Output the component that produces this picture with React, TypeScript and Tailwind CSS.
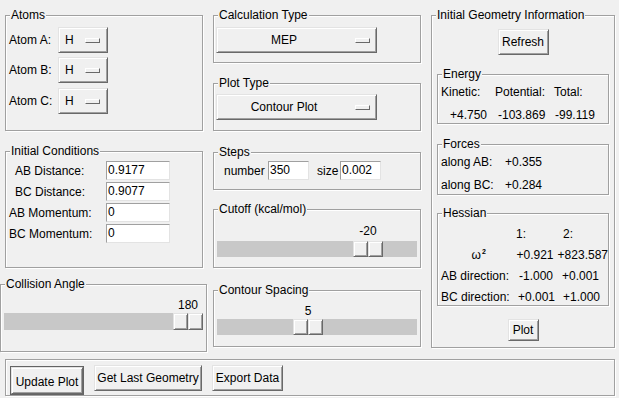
import type { ReactNode } from 'react';

const raised =
  'bg-[#f0f0f0] border border-t-[#e3e3e3] border-l-[#e3e3e3] border-b-[#696969] border-r-[#696969] shadow-[inset_1px_1px_0_#ffffff,inset_-1px_-1px_0_#a0a0a0]';

const entry =
  'bg-white border border-t-[#a0a0a0] border-l-[#a0a0a0] border-b-[#e3e3e3] border-r-[#e3e3e3] pl-px leading-[17px]';

function Group({ label, className, children }: { label: string; className: string; children?: ReactNode }) {
  return (
    <div className={`relative border border-[#a0a0a0] shadow-[inset_1px_1px_0_#ffffff,1px_1px_0_#ffffff] ${className}`}>
      <span className="absolute -top-[8px] left-[4px] bg-[#f0f0f0] px-px leading-[14px] whitespace-nowrap">{label}</span>
      {children}
    </div>
  );
}

function Indicator() {
  return (
    <span className="block w-[15px] h-[5px] bg-[#f0f0f0] border border-t-white border-l-white border-b-[#696969] border-r-[#696969]" />
  );
}

function AtomRow({ label, className }: { label: string; className: string }) {
  return (
    <div className={`flex items-center ${className}`}>
      <span className="w-[49px]">{label}</span>
      <div className={`w-[50px] h-[26px] flex items-center pl-[6px] ${raised}`}>
        <span className="w-[20px] leading-[14px]">H</span>
        <Indicator />
      </div>
    </div>
  );
}

function OptionMenu({ text, className }: { text: string; className: string }) {
  return (
    <div className={`w-[161px] h-[26px] flex items-center pr-[6px] ${raised} ${className}`}>
      <span className="flex-1 text-center pr-[4px] leading-[14px]">{text}</span>
      <Indicator />
    </div>
  );
}

function Thumb({ left }: { left: number }) {
  return (
    <div className="absolute top-0 h-full w-[30px] flex" style={{ left }}>
      <div className={`w-[15px] h-full ${raised}`} />
      <div className={`w-[15px] h-full ${raised}`} />
    </div>
  );
}

function Slider({
  value,
  from,
  to,
  width,
  className,
  labelClass,
  troughClass,
}: {
  value: number;
  from: number;
  to: number;
  width: number;
  className: string;
  labelClass: string;
  troughClass: string;
}) {
  const left = Math.round(((value - from) / (to - from)) * (width - 30));
  return (
    <div className={className}>
      <div className={`w-[30px] text-center leading-[14px] ${labelClass}`} style={{ marginLeft: left }}>
        {value}
      </div>
      <div className={`relative bg-[#c8c8c8] ${troughClass}`} style={{ width }}>
        <Thumb left={left} />
      </div>
    </div>
  );
}

function Field({ label, value, labelClass }: { label: string; value: string; labelClass: string }) {
  return (
    <div className="flex items-center h-[19px]">
      <span className={`w-[100px] leading-[14px] ${labelClass}`}>{label}</span>
      <div className={`w-[64px] h-[19px] ${entry}`}>{value}</div>
    </div>
  );
}

function Button({ text, className }: { text: string; className: string }) {
  return <div className={`flex items-center justify-center leading-[14px] ${raised} ${className}`}>{text}</div>;
}

export default function App() {
  return (
    <div className="w-[619px] h-[398px] bg-[#f0f0f0] overflow-hidden text-[12px] text-black font-['Liberation_Sans',Arial,sans-serif]">
      <div className="flex items-start pt-[15px]">
        {/* left column */}
        <div className="ml-[5px] w-[198px] flex flex-col">
          <Group label="Atoms" className="h-[116px] pl-[3px] pt-[11px]">
            <AtomRow label="Atom A:" className="" />
            <AtomRow label="Atom B:" className="mt-[4px]" />
            <AtomRow label="Atom C:" className="mt-[5px]" />
          </Group>

          <Group label="Initial Conditions" className="mt-[20px] h-[117px] pt-[9px] flex flex-col gap-[2px]">
            <Field label="AB Distance:" value="0.9177" labelClass="pl-[9px]" />
            <Field label="BC Distance:" value="0.9077" labelClass="pl-[9px]" />
            <Field label="AB Momentum:" value="0" labelClass="pl-[3px]" />
            <Field label="BC Momentum:" value="0" labelClass="pl-[3px]" />
          </Group>

          <Group label="Collision Angle" className="-ml-[5px] mt-[16px] w-[207px] h-[68px]">
            <Slider
              value={180}
              from={0}
              to={180}
              width={199}
              className="pl-[3px]"
              labelClass="mt-[13px]"
              troughClass="mt-px h-[17px]"
            />
          </Group>
        </div>

        {/* middle column */}
        <div className="ml-[10px] w-[208px] flex flex-col">
          <Group label="Calculation Type" className="h-[48px] pl-[2px] pt-[11px]">
            <OptionMenu text="MEP" className="" />
          </Group>

          <Group label="Plot Type" className="mt-[20px] h-[48px] pl-[2px] pt-[10px]">
            <OptionMenu text="Contour Plot" className="" />
          </Group>

          <Group label="Steps" className="mt-[21px] h-[38px] pl-[10px] pt-[8px]">
            <div className="flex items-center">
              <span className="w-[44px] leading-[14px]">number</span>
              <div className={`w-[41px] h-[19px] ${entry}`}>350</div>
              <span className="ml-[8px] w-[23px] leading-[14px]">size</span>
              <div className={`w-[41px] h-[19px] ${entry}`}>0.002</div>
            </div>
          </Group>

          <Group label="Cutoff (kcal/mol)" className="mt-[19px] h-[59px] pl-[3px]">
            <Slider
              value={-20}
              from={-100}
              to={0}
              width={200}
              className=""
              labelClass="mt-[14px]"
              troughClass="mt-[3px] h-[16px]"
            />
          </Group>

          <Group label="Contour Spacing" className="mt-[22px] h-[57px] pl-[3px]">
            <Slider
              value={5}
              from={1}
              to={10}
              width={200}
              className=""
              labelClass="mt-[13px]"
              troughClass="mt-[1px] h-[16px]"
            />
          </Group>
        </div>

        {/* right column */}
        <Group label="Initial Geometry Information" className="ml-[10px] w-[184px] h-[333px] pt-[13px] flex flex-col">
          <Button text="Refresh" className="self-center w-[51px] h-[26px]" />

          <Group label="Energy" className="ml-[5px] mt-[19px] w-[172px] h-[50px] pl-[3px] pt-[5px]">
            <div className="flex h-[23px] items-center">
              <span className="w-[54px]">Kinetic:</span>
              <span className="w-[59px]">Potential:</span>
              <span>Total:</span>
            </div>
            <div className="flex h-[23px] items-center pl-[9px]">
              <span className="w-[48px]">+4.750</span>
              <span className="w-[57px]">-103.869</span>
              <span>-99.119</span>
            </div>
          </Group>

          <Group label="Forces" className="ml-[5px] mt-[20px] w-[172px] h-[51px] pl-[3px] pt-[5px]">
            <div className="flex h-[23px] items-center">
              <span className="w-[64px]">along AB:</span>
              <span>+0.355</span>
            </div>
            <div className="flex h-[23px] items-center">
              <span className="w-[64px]">along BC:</span>
              <span>+0.284</span>
            </div>
          </Group>

          <Group label="Hessian" className="ml-[5px] mt-[18px] w-[172px] h-[93px] pl-[3px] pt-[9px]">
            <div className="flex h-[21px] items-center">
              <span className="w-[75px]" />
              <span className="w-[47px]">1:</span>
              <span>2:</span>
            </div>
            <div className="flex h-[21px] items-center">
              <span className="w-[77px] flex justify-center items-start leading-[14px]">
                <span>ω</span>
                <span className="ml-px text-[7px] leading-[7px] font-bold">2</span>
              </span>
              <span className="w-[42px]">+0.921</span>
              <span>+823.587</span>
            </div>
            <div className="flex h-[21px] items-center">
              <span className="w-[78px]">AB direction:</span>
              <span className="w-[43px]">-1.000</span>
              <span>+0.001</span>
            </div>
            <div className="flex h-[21px] items-center">
              <span className="w-[77px]">BC direction:</span>
              <span className="w-[45px]">+0.001</span>
              <span>+1.000</span>
            </div>
          </Group>

          <Button text="Plot" className="self-center mt-[13px] w-[31px] h-[22px]" />
        </Group>
      </div>

      {/* bottom bar */}
      <div className="ml-[5px] mt-[7px] w-[610px] h-[37px] border border-[#a0a0a0] shadow-[inset_1px_1px_0_#ffffff,1px_1px_0_#ffffff] flex items-start pl-[4px]">
        <div className="mt-[6px] w-[74px] h-[29px] border border-[#646464] flex">
          <div className={`flex-1 flex items-center justify-center pt-[2px] leading-[14px] ${raised}`}>Update Plot</div>
        </div>
        <Button text="Get Last Geometry" className="ml-[10px] mt-[5px] w-[108px] h-[26px]" />
        <Button text="Export Data" className="ml-[10px] mt-[5px] w-[71px] h-[26px]" />
      </div>
    </div>
  );
}
